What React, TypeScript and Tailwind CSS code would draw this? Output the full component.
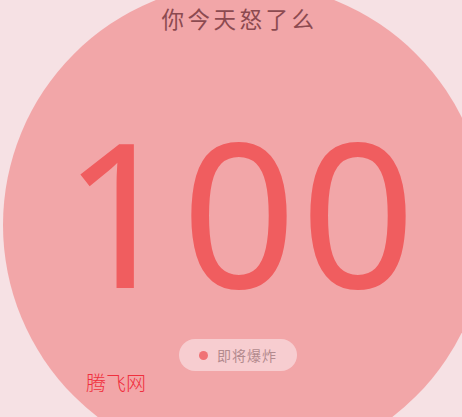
export default function App() {
    return (
        <div className="relative w-[462px] h-[417px] overflow-hidden bg-[#f6e1e4]">
            <div className="w-[484px] h-[484px] ml-[3px] -mt-[17px] rounded-full bg-[#f2a6a8] flex flex-col items-center pr-[14px]">
                <h1 className="mt-[21px] ml-[3px] text-[22.5px] leading-[28px] tracking-[3.5px] text-[#8c4a50] font-['Noto_Sans_CJK_SC',sans-serif]">
                    你今天怒了么
                </h1>
                <div className="mt-[68px] ml-[6px] text-[201px] leading-[220px] tracking-[4px] text-[#f05d5f] font-['Noto_Sans',sans-serif]">
                    100
                </div>
                <div className="mt-[19px] h-[32px] px-[20px] rounded-full bg-[#f7cdd0] flex items-center gap-[9px]">
                    <span className="w-[9px] h-[9px] rounded-full bg-[#f07275]" />
                    <span className="text-[14px] tracking-[1px] text-[#b38a8e] font-['Noto_Sans_CJK_SC',sans-serif]">即将爆炸</span>
                </div>
            </div>
            <span className="absolute left-[86px] top-[368px] text-[20px] text-[#f0303e] font-['Noto_Sans_CJK_SC',sans-serif] font-light">
                腾飞网
            </span>
        </div>
    );
}
